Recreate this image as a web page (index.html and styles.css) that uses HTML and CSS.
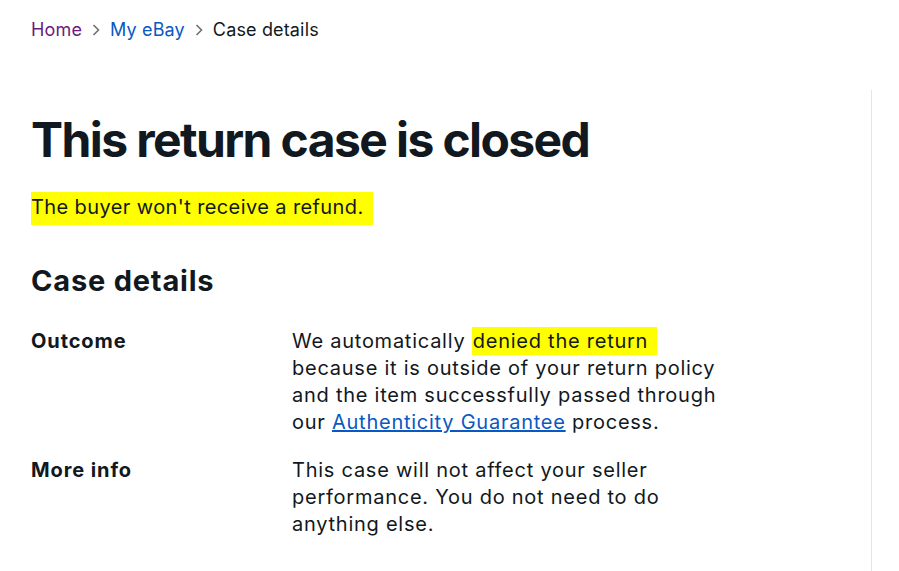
FILE: index.html
```html
<!DOCTYPE html>
<html>
<head>
<meta charset="utf-8">
<link rel="stylesheet" href="styles.css">
</head>
<body>
<div class="page">
  <main class="main">
    <nav class="crumbs">
      <a class="crumb visited" href="#">Home</a>
      <svg class="chev" viewBox="0 0 10 14" width="10" height="14"><path d="M2.5 2 L7.5 7 L2.5 12" fill="none" stroke="#707070" stroke-width="1.6"/></svg>
      <a class="crumb link" href="#">My eBay</a>
      <svg class="chev" viewBox="0 0 10 14" width="10" height="14"><path d="M2.5 2 L7.5 7 L2.5 12" fill="none" stroke="#707070" stroke-width="1.6"/></svg>
      <span class="crumb current">Case details</span>
    </nav>
    <h1 class="title">This return case is closed</h1>
    <p class="subtitle"><span class="hl hl-sub">The buyer won't receive a refund.</span></p>
    <h2 class="section">Case details</h2>
    <dl class="details">
      <dt class="label">Outcome</dt>
      <dd class="value">We automatically <span class="hl hl-denied">denied the return</span><br>because it is outside of your return policy<br>and the item successfully passed through<br>our <a class="inline-link" href="#">Authenticity Guarantee</a> process.</dd>
      <dt class="label">More info</dt>
      <dd class="value">This case will not affect your seller<br>performance. You do not need to do<br>anything else.</dd>
    </dl>
  </main>
  <aside class="side"></aside>
</div>
</body>
</html>
```
FILE: styles.css
```css
* { box-sizing: border-box; }
html, body { margin: 0; padding: 0; background: #fff; }
body {
  font-family: Inter, "Open Sans", Arial, sans-serif;
  color: #111820;
  width: 899px;
  height: 571px;
  overflow: hidden;
}
.page {
  display: flex;
  height: 571px;
}
.main {
  width: 871px;
  padding: 16px 0 0 31px;
}
.side {
  margin-top: 90px;
  border-left: 1px solid #e5e5e5;
  flex: 1;
}
.crumbs {
  display: flex;
  align-items: center;
  gap: 8px;
  font-size: 18px;
  line-height: 28px;
  letter-spacing: 0.15px;
}
.crumb { text-decoration: none; }
.visited { color: #6b1c7e; }
.link { color: #0a58c2; }
.current { color: #111820; }
.chev { margin: 0 1px; }
.title {
  margin: 68px 0 0;
  font-size: 48px;
  font-weight: 700;
  line-height: 56px;
  letter-spacing: -1.6px;
}
.subtitle {
  margin: 25px 0 0;
  font-size: 20px;
  line-height: 28px;
  letter-spacing: 0.4px;
}
.hl { background: #ffff00; }
.hl-sub { padding: 3px 9px 6px 0; }
.section {
  margin: 42px 0 0;
  font-size: 29px;
  font-weight: 700;
  line-height: 36px;
  letter-spacing: 0.8px;
}
.details {
  display: grid;
  grid-template-columns: 261px 470px;
  row-gap: 21px;
  margin: 29px 0 0;
}
.label {
  font-weight: 700;
  font-size: 20px;
  line-height: 27px;
  letter-spacing: 0.9px;
  margin: 0;
}
.value {
  margin: 0;
  font-size: 20px;
  line-height: 27px;
  letter-spacing: 0.75px;
}
.hl-denied { padding: 2px 9px 2px 1px; }
.inline-link { color: #0a58c2; text-decoration: underline; }
```
